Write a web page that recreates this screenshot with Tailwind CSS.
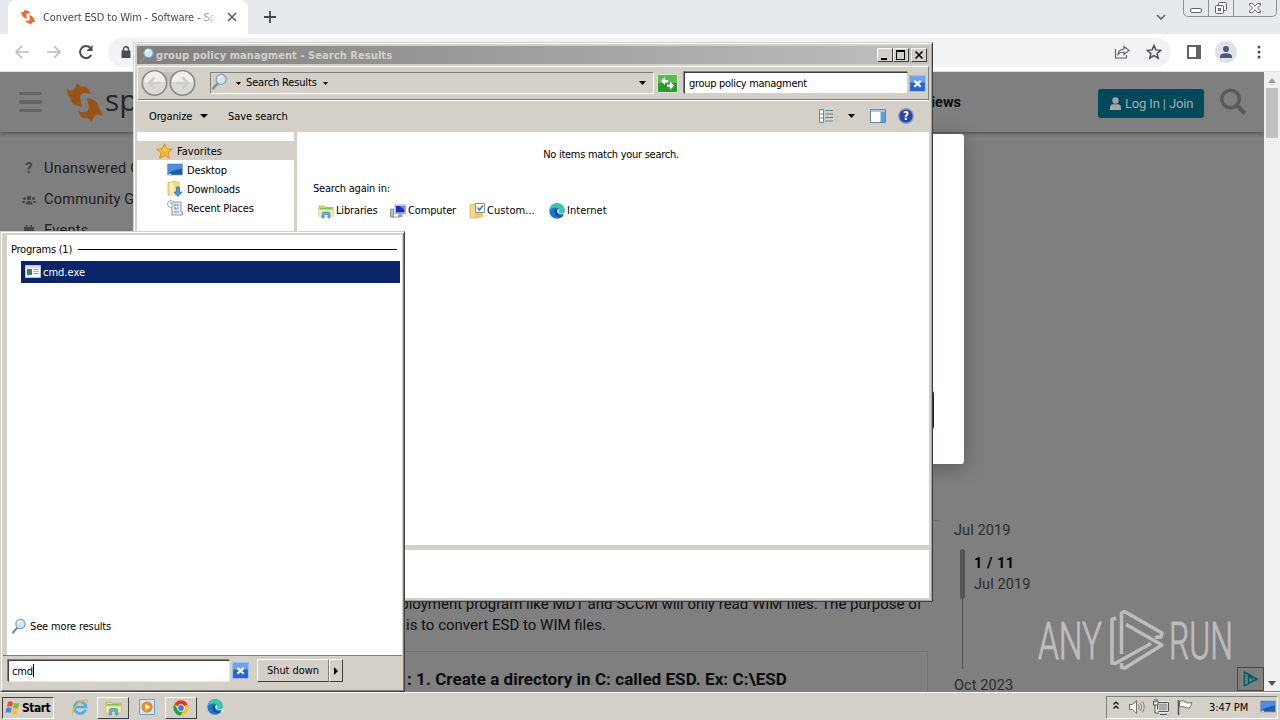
<!DOCTYPE html>
<html lang="en">

<head>
    <meta charset="UTF-8">
    <meta name="viewport" content="width=device-width, initial-scale=1.0">
    <title>Convert ESD to Wim - Software - Spiceworks</title>
    <script src="https://cdn.jsdelivr.net/npm/@tailwindcss/browser@4"></script>
</head>

<body class="w-[1280px] h-[720px] overflow-hidden relative bg-[#7f7f7f] text-black text-[11px] leading-[14px] tracking-[-0.15px] font-['DejaVu_Sans_Condensed','DejaVu_Sans',sans-serif] [font-stretch:condensed] whitespace-nowrap">

    <!-- Shared icons -->
    <svg class="hidden">
        <symbol id="lens" viewBox="0 0 16 16">
            <path d="M6.5 9.5L2 14.5" stroke="#8a8a8a" stroke-width="2.2" stroke-linecap="round" />
            <circle cx="9.5" cy="6" r="4.7" fill="#cfe6f8" stroke="#8c9db0" stroke-width="1.2" />
            <path d="M7 5.5a3 3 0 0 1 3-2.5" stroke="#fff" stroke-width="1.4" fill="none" />
        </symbol>
        <symbol id="folder" viewBox="0 0 16 16">
            <path d="M1 3h5l1 1.5h8V13H1z" fill="#f3d57a" stroke="#c9a548" stroke-width=".8" />
            <path d="M2 5.500h12" stroke="#7cc36a" stroke-width="1.500" />
            <path d="M1 7h14v6H1z" fill="#fbeaa6" />
            <path d="M4 15V10.500q0-1.500 1.500-1.500h5q1.500 0 1.500 1.500V15h-2v-3.500H6V15z" fill="#5fb4e6" stroke="#3c86c0" stroke-width=".6" />
        </symbol>
        <symbol id="edge" viewBox="0 0 16 16">
            <circle cx="8" cy="8" r="7.700" fill="#1a78c8" />
            <path d="M.5 7C1.500 2.500 5 .3 8.200.3c4.500 0 7.500 3.200 7.500 6.400 0 2.500-1.800 3.900-3.900 3.900-1.600 0-2.300-.7-2.100-1.300.6-.6.700-1.300.7-1.900 0-1.700-1.600-3-4-3-2.300 0-4.500 1-5.900 2.600z" fill="#3cc6b0" />
            <path d="M5.500 7c-1 4 2 7.500 6 7 1.400-.2 2.400-.8 3.200-1.700-2.500 1-6 .3-6.500-2.800-.2-1 .2-1.600.6-2.200C8 6.300 6 6 5.500 7z" fill="#0d4f98" />
            <path d="M9.700 9.300c.7-.8.7-2 .5-2.700-.8-.8-2 0-2 1.700.2 2.700 4 3.700 7 2.200l-1 2.300 1.800 1V8.500c-.7 1.500-2.300 2.200-4.200 2.100-1.500 0-2.300-.7-2.100-1.300z" fill="#fff" />
        </symbol>
        <symbol id="screen" viewBox="0 0 16 14">
            <path d="M.5 1h15v11H.5z" fill="#2459b0" stroke="#8fa4bd" stroke-width=".8" />
            <path d="M1 1.500h14v4Q8 6 1 10z" fill="#4d8fe0" />
            <path d="M1.500 10.500h2.500v1.500H1.500z" fill="#b6e0ff" />
        </symbol>
        <symbol id="clear" viewBox="0 0 16 16">
            <path d="M0 0h16v16H0z" fill="#2b65cb" />
            <path d="M0 0h16v7H0z" fill="#6ea2ea" />
            <path d="M.5.5h15v15H.5z" fill="none" stroke="#9cc0ef" />
            <path d="M5 5.500l6 5.500M11 5.500L5 11" stroke="#fff" stroke-width="2" />
        </symbol>
        <symbol id="spice" viewBox="0 0 34 38">
            <path id="swirl" d="M10 0q2 4 7 4 5 1 6 7-6-3-9 0-3 3 1 12-8 0-11-5l-1-4Q0 11 0 6q3 2 6 1 2-2 4-7z" />
            <use href="#swirl" transform="rotate(180 17 19)" />
        </symbol>
    </svg>

    <!-- Browser window -->
    <div class="h-[691px] flex flex-col">
        <!-- Tab strip -->
        <div class="h-[34px] bg-[#e7eaed] flex">
            <div class="ml-2 w-[240px] h-[34px] bg-white rounded-t-lg flex items-center pl-[13px] pr-[10px]">
                <svg class="w-[14px] h-4 mr-2 fill-[#f26a21]"><use href="#spice" /></svg>
                <span class="w-[175px] mt-[2px] overflow-hidden text-[#45494d] tracking-[-0.1px] [mask-image:linear-gradient(to_right,#000_88%,transparent)]">Convert ESD to Wim - Software - Spiceworks</span>
                <svg class="w-[10px] h-[10px] ml-[9px]" viewBox="0 0 10 10"><path d="M1 1l8 8M9 1L1 9" stroke="#5f6368" stroke-width="1.700" /></svg>
            </div>
            <svg class="w-3 h-3 ml-4 mt-[11px]" viewBox="0 0 12 12"><path d="M6 0v12M0 6h12" stroke="#45494d" stroke-width="1.800" /></svg>
            <svg class="w-[10px] h-[6px] ml-auto mr-[17px] mt-[14px]" viewBox="0 0 10 6"><path d="M1 1l4 4 4-4" fill="none" stroke="#5f6368" stroke-width="1.600" /></svg>
            <!-- Window buttons -->
            <div class="h-[17px] w-[94px] mr-[3px] border border-t-0 border-[#8c9196] rounded-b-[5px] flex">
                <div class="w-[25px] border-r border-[#8c9196]"><svg class="w-6 h-4" viewBox="0 0 24 16"><rect x="6.500" y="8.500" width="11" height="4" rx="1.500" fill="#fff" stroke="#5c6168" /></svg></div>
                <div class="w-[25px] border-r border-[#8c9196]"><svg class="w-6 h-4" viewBox="0 0 24 16" fill="#fff" stroke="#5c6168"><rect x="9.500" y="2.500" width="8" height="8" rx="1" /><rect x="6.500" y="5.500" width="8" height="8" rx="1" /><rect x="9.500" y="8.500" width="2" height="2" /></svg></div>
                <svg class="w-[42px] h-4" viewBox="0 0 42 16"><path d="M15.500 3.500h3l2.500 2.700 2.500-2.700h3v1.500L23.500 8l3 3v1.500h-3L21 9.800l-2.500 2.700h-3V11l3-3-3-3z" fill="#fff" stroke="#5c6168" /></svg>
            </div>
        </div>
        <!-- Toolbar -->
        <div class="h-[38px] bg-white border-b border-[#dcdee0] flex items-center shrink-0">
            <svg class="w-4 h-4 ml-[14px] -mt-px" viewBox="0 0 16 16" fill="none" stroke="#babcbe" stroke-width="1.600"><path d="M15 8H2M8 2L2 8l6 6" /></svg>
            <svg class="w-4 h-4 ml-4 -mt-px" viewBox="0 0 16 16" fill="none" stroke="#babcbe" stroke-width="1.600"><path d="M1 8h13M8 2l6 6-6 6" /></svg>
            <svg class="w-4 h-4 ml-4 -mt-px" viewBox="0 0 16 16"><path d="M13.300 11A6 6 0 1 1 12.500 4" fill="none" stroke="#4a4d51" stroke-width="2" /><path d="M14.500 1v6h-6z" fill="#4a4d51" /></svg>
            <div class="ml-[14px] w-[1063px] h-[29px] rounded-full bg-[#f1f3f4] flex items-center">
                <svg class="w-[10px] h-3 ml-[13px] -mt-[2px]" viewBox="0 0 10 12"><path d="M.5 4.500h9V12h-9z" fill="#4a4d51" /><path d="M2.500 5V3.200a2.500 2.500 0 0 1 5 0V5" fill="none" stroke="#4a4d51" stroke-width="1.400" /></svg>
                <svg class="w-4 h-4 ml-auto mr-4 -mt-px" viewBox="0 0 16 16" fill="none" stroke="#5f6368" stroke-width="1.200"><path d="M1.500 5v9h11v-3" /><path d="M4 10.500q.5-5 6-5.500V2.500L15 6.500l-5 4V8q-4 0-6 2.500z" /></svg>
                <svg class="w-4 h-4 mr-[9px] -mt-px" viewBox="0 0 16 16"><path d="M8 1.500l1.900 4.400 4.800.4-3.600 3.100 1.100 4.700L8 11.600l-4.200 2.500 1.100-4.700L1.300 6.300l4.800-.4z" fill="none" stroke="#4a4d51" stroke-width="1.500" /></svg>
            </div>
            <svg class="w-[14px] h-[14px] ml-4 -mt-px" viewBox="0 0 14 14"><path d="M1 1h12v12H1z" fill="none" stroke="#5f6368" stroke-width="2" /><path d="M9 0h5v14H9z" fill="#5f6368" /></svg>
            <svg class="w-[22px] h-[22px] ml-[14px] -mt-px" viewBox="0 0 22 22"><circle cx="11" cy="11" r="11" fill="#dfe2e8" /><circle cx="11" cy="8" r="3" fill="#4b5a78" /><path d="M5 17v-1.500C5 13 9 12.300 11 12.300s6 .7 6 3.200V17z" fill="#4b5a78" /></svg>
            <svg class="w-1 h-[14px] ml-[20px] -mt-px" viewBox="0 0 4 14" fill="#4a4d51"><circle cx="2" cy="2" r="1.500" /><circle cx="2" cy="7" r="1.500" /><circle cx="2" cy="12" r="1.500" /></svg>
        </div>
        <!-- Page -->
        <div class="flex-1 flex min-h-0 tracking-normal font-[Roboto,sans-serif] [font-stretch:normal]">
            <div class="w-[1264px] flex flex-col relative overflow-hidden">
                <div class="h-[60px] shrink-0 flex items-center shadow-[0_1px_4px_rgba(0,0,0,0.45)]">
                    <div class="ml-[19px] w-[23px] flex flex-col gap-[5px]">
                        <div class="h-[3.500px] bg-[#646464] rounded-sm"></div>
                        <div class="h-[3.500px] bg-[#646464] rounded-sm"></div>
                        <div class="h-[3.500px] bg-[#646464] rounded-sm"></div>
                    </div>
                    <svg class="w-[35px] h-[39px] ml-[25px] fill-[#9a5216]"><use href="#spice" /></svg>
                    <span class="ml-[3px] -mt-[5px] w-[200px] text-[30px] leading-8 text-[#262626] font-['Open_Sans']">spiceworks</span>
                    <span class="w-[656px] mt-[2px] text-right text-[14.500px] leading-5 font-bold text-[#0c0c0c]">Reviews</span>
                    <div class="ml-[137px] w-[106px] h-[29px] mt-[3px] rounded-[3px] bg-[#00495a] flex items-center pl-3 text-[13px] text-[#a5b0b3] tracking-[-0.15px]">
                        <svg class="w-[11px] h-[13px] mr-1" viewBox="0 0 11 13" fill="#a5a5a5"><circle cx="5.500" cy="3.500" r="3.200" /><path d="M0 13v-2.500Q0 7.500 3 7.300h5q3 .2 3 3.200V13z" /></svg>
                        <span>Log In | Join</span>
                    </div>
                    <svg class="w-7 h-7 ml-[15px]" viewBox="0 0 28 28" fill="none" stroke="#5a5a5a"><circle cx="11.500" cy="11" r="8.800" stroke-width="3.500" /><path d="M18 17.500l8 8" stroke-width="4.200" /></svg>
                </div>
                <div class="flex flex-1 min-h-0">
                    <!-- Sidebar -->
                    <div class="w-[300px] pt-[21px] pl-[22px] text-[14.500px] leading-[31px] text-[#202020] tracking-[0.25px]">
                        <div class="flex items-center"><span class="w-[14px] mr-2 text-center font-bold text-[#454545]">?</span>Unanswered Questions</div>
                        <div class="flex items-center">
                            <svg class="w-[14px] h-[10px] mr-2" viewBox="0 0 14 10" fill="#454545"><circle cx="7" cy="3" r="2.300" /><circle cx="2.500" cy="3.500" r="1.500" /><circle cx="11.500" cy="3.500" r="1.500" /><path d="M3.500 9.500q0-3.500 3.500-3.500t3.500 3.500zM0 8q0-2.500 3-2.300L2.500 8zM14 8q0-2.500-3-2.300l.5 2.300z" /></svg>
                            Community Groups
                        </div>
                        <div class="flex items-center">
                            <svg class="w-[14px] h-3 mr-2" viewBox="0 0 14 12" fill="#454545"><path d="M2 2h2V0h1.500v2h3V0H10v2h2v10H2z" /></svg>
                            Events
                        </div>
                    </div>
                    <!-- Post -->
                    <div class="w-[628px] h-full relative flex flex-col">
                        <div class="pt-[462px] text-[15px] leading-[21px] text-[#0e0e0e]">
                            <div class="w-[622px] text-right">deployment program like MDT and SCCM will only read WIM files. The purpose of</div>
                            <div class="pl-[106px]">is to convert ESD to WIM files.</div>
                        </div>
                        <div class="mt-[15px] flex-1 border border-b-0 border-[#737373] pt-[17px] pl-[106px] text-[17px] leading-5 font-bold text-[#0c0c0c] tracking-[0.05px]">: 1. Create a directory in C: called ESD. Ex: C:\ESD</div>
                    </div>
                    <!-- Timeline -->
                    <div class="flex-1 pt-[388px]">
                        <div class="w-3 border-t border-[#707070]"></div>
                        <div class="pl-[26px] text-[14.500px] leading-5 text-[#2c2c2c] tracking-[0.1px]">
                            <div>Jul 2019</div>
                            <div class="flex mt-[8px] h-[120px] ml-[6px]">
                                <div class="w-[5px] flex flex-col items-center">
                                    <div class="w-[5px] h-[50px] rounded-sm bg-[#555]"></div>
                                    <div class="w-px flex-1 bg-[#555]"></div>
                                </div>
                                <div class="ml-[9px] pt-[5px]">
                                    <div class="font-bold text-black tracking-[0.5px]">1 / 11</div>
                                    <div class="mt-px">Jul 2019</div>
                                </div>
                            </div>
                            <div class="mt-[7px]">Oct 2023</div>
                        </div>
                    </div>
                </div>
                <!-- Dialog over the page -->
                <div class="absolute left-[300px] top-[62px] w-[664px] h-[330px] bg-white rounded-[3px] shadow-[0_4px_20px_rgba(0,0,0,0.3)]">
                    <div class="absolute right-[30px] top-[256px] w-40 h-10 bg-[#222] rounded-sm"></div>
                </div>
                <!-- Ad marker -->
                <div class="absolute right-0 bottom-0 w-[27px] h-6 border border-[#4a4a4a] flex items-center justify-center">
                    <svg class="w-[15px] h-4" viewBox="0 0 15 16" fill="none" stroke="#005f66" stroke-width="1.600"><path d="M4.500 13.500l-3 1V1L14 8l-8.500 4.500V5l4.500 3" /></svg>
                </div>
                <!-- Watermark -->
                <svg class="absolute left-[1036px] top-[536px] w-[200px] h-[66px]" viewBox="0 0 200 66">
                    <g fill="#bdbdbd" stroke="#bdbdbd" stroke-width="1" font-family="Roboto" font-size="51" font-weight="300">
                        <text x="2" y="51" textLength="64" lengthAdjust="spacingAndGlyphs">ANY</text>
                        <text x="133" y="51" textLength="64" lengthAdjust="spacingAndGlyphs">RUN</text>
                    </g>
                    <g fill="none" stroke="#bdbdbd" stroke-width="3.500" stroke-linejoin="round">
                        <path d="M80 10l-4 1.500V55l3 .5 36-20" />
                        <path d="M85.500 46V5l3-1.500L126 25l-1 4-6 .5" />
                        <path d="M90 16.500L126 37 89 60l-3.500-.5V55" />
                    </g>
                </svg>
            </div>
            <!-- Scrollbar -->
            <div class="w-4 bg-[#f1f1f1] flex flex-col items-center">
                <svg class="w-2 h-4" viewBox="0 0 8 16"><path d="M0 11l4-5 4 5z" fill="#a3a3a3" /></svg>
                <div class="w-3 h-[50px] bg-[#c1c1c1]"></div>
                <svg class="w-2 h-4 mt-auto" viewBox="0 0 8 16"><path d="M0 6l4 5 4-5z" fill="#505050" /></svg>
            </div>
        </div>
    </div>

    <!-- Explorer window -->
    <div class="absolute left-[133px] top-[42px] w-[800px] h-[560px] bg-[#d4d0c8] border border-l-[#d4d0c8] border-t-[#d4d0c8] border-r-[#404040] border-b-[#404040] shadow-[inset_1px_1px_#fff,inset_-1px_-1px_#a0a0a0] p-[3px] flex flex-col">
        <!-- Title bar -->
        <div class="h-[18px] bg-linear-to-r from-[#808080] to-[#c0c0c0] flex items-center pl-[2px] pr-[2px] shrink-0">
            <svg class="w-4 h-4 mr-[1px]"><use href="#lens" /></svg>
            <span class="mt-[2px] font-bold text-[#d4d0c8] tracking-[0.07px]">group policy managment - Search Results</span>
            <div class="ml-auto flex h-[14px]">
                <div class="w-4 bg-[#d4d0c8] border border-t-white border-l-white border-r-[#404040] border-b-[#404040]"><svg class="w-[14px] h-3" viewBox="0 0 14 12"><path d="M3 9h6v2H3z" /></svg></div>
                <div class="w-4 bg-[#d4d0c8] border border-t-white border-l-white border-r-[#404040] border-b-[#404040]"><svg class="w-[14px] h-3" viewBox="0 0 14 12"><path d="M2 1h9v10H2zM3 3v7h7V3z" fill-rule="evenodd" /></svg></div>
                <div class="w-4 ml-[2px] bg-[#d4d0c8] border border-t-white border-l-white border-r-[#404040] border-b-[#404040]"><svg class="w-[14px] h-3" viewBox="0 0 14 12"><path d="M3.500 2.500l7 7M10.500 2.500l-7 7" stroke="#000" stroke-width="1.600" /></svg></div>
            </div>
        </div>
        <!-- Address bar -->
        <div class="mt-[2px] h-[34px] shrink-0 border border-white border-b-[#808080] border-r-[#808080] shadow-[0_1px_#fff] flex items-center">
            <svg class="w-[60px] h-[28px] ml-[2px]" viewBox="0 0 60 28">
                <path d="M14 3h30v9H14z" fill="#c3c0ba" />
                <g fill="#dcdad5" stroke="#8b8a87" stroke-width="1.600"><circle cx="14.500" cy="14" r="12.200" /><circle cx="42.500" cy="14" r="12.200" /></g>
                <path d="M4 13a10.500 10.500 0 0 1 21 0zM32 13a10.500 10.500 0 0 1 21 0z" fill="#f0efec" />
                <g fill="none" stroke="#cfcdc8" stroke-width="2.500"><path d="M21 14H10M14.500 8.500L9 14l5.500 5.500M36 14h11M42.500 8.500L48 14l-5.500 5.500" /></g>
            </svg>
            <div class="ml-[10px] w-[444px] h-[22px] border border-[#808080] border-r-white border-b-white flex items-center">
                <svg class="w-[17px] h-[17px] -mt-1"><use href="#lens" /></svg>
                <svg class="w-[5px] h-[3px] ml-2 mr-[5px]" viewBox="0 0 5 3"><path d="M0 0h5L2.500 3z" /></svg>
                <span>Search Results</span>
                <svg class="w-[5px] h-[3px] ml-[6px]" viewBox="0 0 5 3"><path d="M0 0h5L2.500 3z" /></svg>
                <svg class="w-[7px] h-[4px] ml-auto mr-[7px]" viewBox="0 0 7 4"><path d="M0 0h7L3.500 4z" /></svg>
            </div>
            <svg class="w-[21px] h-[19px] ml-[3px]" viewBox="0 0 21 19"><path d="M.5.5h20v18H.5z" fill="#2c9a30" stroke="#d5ead0" /><path d="M1 1h19v8H1z" fill="#5cbb55" /><path d="M4 7l4-4v3h3v2.500H8V11zM17 11.500l-4-4v3h-3V13h3v3z" fill="#fff" /></svg>
            <div class="ml-[6px] w-[224px] h-[22px] bg-white border border-t-[#404040] border-l-[#404040] border-[#d4d0c8] shadow-[-1px_-1px_#808080] flex items-center pl-1 pt-[2px] tracking-[-0.3px]">group policy managment</div>
            <svg class="w-[17px] h-[17px] ml-px shrink-0"><use href="#clear" /></svg>
        </div>
        <!-- Command bar -->
        <div class="h-[32px] shrink-0 flex items-center pl-[12px]">
            <span class="w-[43px] mt-[2px]">Organize</span>
            <svg class="w-[8px] h-[4px] ml-2 mr-5" viewBox="0 0 8 4"><path d="M0 0h8L4 4z" /></svg>
            <span class="mt-[2px] tracking-[-0.05px]">Save search</span>
            <svg class="w-[14px] h-[14px] ml-auto" viewBox="0 0 14 14"><path d="M.5.5h4v13h-4zM.5 5h4M.5 9h4" fill="#fff" stroke="#68859f" /><path d="M6 1.500h8M6 5h8M6 8.500h8M6 12h8" stroke="#5588b5" /></svg>
            <svg class="w-[7px] h-[4px] ml-[15px]" viewBox="0 0 7 4"><path d="M0 0h7L3.500 4z" /></svg>
            <svg class="w-4 h-[14px] ml-[15px]" viewBox="0 0 16 14"><path d="M.5.500h15v13H.5z" fill="#fff" stroke="#5d87ad" /><path d="M1 1h14v2H1z" fill="#a9c9e2" /><path d="M10.500 3h4.500v10h-4.500z" fill="#55a3d6" /></svg>
            <svg class="w-4 h-4 ml-3 mr-[15px]" viewBox="0 0 16 16"><circle cx="8" cy="8" r="7.300" fill="#2447a8" stroke="#8d9cc2" stroke-width="1.400" /><text x="8" y="12" text-anchor="middle" font-size="11.500" font-weight="bold" fill="#fff">?</text></svg>
        </div>
        <!-- Content -->
        <div class="h-[413px] shrink-0 flex bg-white">
            <div class="w-[157px] pt-[9px]">
                <div class="h-[19px] bg-[#d4d0c8] flex items-center pl-[19px]">
                    <svg class="w-[17px] h-4 mr-1" viewBox="0 0 17 16"><path d="M8.500.8l2.300 5 5.400.6-4 3.600 1.200 5.300-4.900-2.800-4.900 2.800L4.800 10l-4-3.600 5.400-.6z" fill="#fbb62a" stroke="#d98a14" stroke-width=".9" /><path d="M8.500 3l1.400 3.500 3 .5-4.400 1z" fill="#ffe58a" /></svg>
                    <span class="mt-[2px] tracking-[0.05px]">Favorites</span>
                </div>
                <div class="h-[19px] flex items-center pl-[30px]"><svg class="w-4 h-[14px] mr-1"><use href="#screen" /></svg><span class="mt-[2px]">Desktop</span></div>
                <div class="h-[19px] flex items-center pl-[30px]">
                    <svg class="w-4 h-4 mr-1" viewBox="0 0 16 16"><path d="M1 1.500l6-1 5 1V14H1z" fill="#f4da84" stroke="#cfae56" stroke-width=".7" /><path d="M3 1l4 1.500v13L3 14z" fill="#fcedb0" /><path d="M9.500 6h3v5h2.500l-4 4.500-4-4.500h2.500z" fill="#3e9be0" stroke="#1e6bb0" stroke-width=".7" /></svg>
                    <span class="mt-[2px]">Downloads</span>
                </div>
                <div class="h-[19px] flex items-center pl-[30px]">
                    <svg class="w-4 h-4 mr-1" viewBox="0 0 16 16"><path d="M4 2h10v10h1.500v3H5V10z" fill="#e9eef2" stroke="#8a959f" /><path d="M7 5h5M7 8h2v2M10 8h2M7 12h5" stroke="#5f86aa" fill="none" /><circle cx="4" cy="4" r="3.400" fill="#fff" stroke="#8fa2b4" /><path d="M4 2v2h2" fill="none" stroke="#4c6d90" stroke-width=".8" /></svg>
                    <span class="mt-[2px]">Recent Places</span>
                </div>
            </div>
            <div class="w-[3px] bg-[#d4d0c8]"></div>
            <div class="flex-1 pt-4 pl-4">
                <div class="w-[596px] text-center tracking-[-0.28px]">No items match your search.</div>
                <div class="mt-5 tracking-[-0.2px]">Search again in:</div>
                <div class="mt-[7px] flex items-center h-4">
                    <div class="w-[72px] ml-[5px] flex items-center gap-[2px]"><svg class="w-4 h-4"><use href="#folder" /></svg>Libraries</div>
                    <div class="w-[79px] flex items-center gap-[2px]">
                        <svg class="w-4 h-4" viewBox="0 0 16 16"><path d="M5 2h10.500v8.500H5z" fill="#d8dce4" stroke="#8b93a3" stroke-width=".7" /><path d="M6 3h8.500v6.500H6z" fill="#1c33b8" /><path d="M10 3h4.500v4z" fill="#6b8df0" /><path d="M8.500 10.500h3.500l1 3.500H8z" fill="#9aa1b0" /><path d="M.5 6h3v8h-3zM2 14h8" fill="#b9bfca" stroke="#7e8696" stroke-width=".8" /></svg>
                        Computer
                    </div>
                    <div class="w-[80px] flex items-center gap-[2px]">
                        <svg class="w-4 h-4" viewBox="0 0 16 16"><path d="M1 2l5-1 3 1v13H1z" fill="#f4da84" stroke="#cfae56" stroke-width=".7" /><path d="M6 7l8 1v6l-8 1z" fill="#e8c760" /><path d="M6.500.500h9v9h-9z" fill="#fff" stroke="#7d90a8" /><path d="M8.500 4.500l2 2.500 3.500-4.500" fill="none" stroke="#3b6dc0" stroke-width="1.400" /></svg>
                        <span class="tracking-[0.05px]">Custom...</span>
                    </div>
                    <div class="flex items-center gap-[2px] tracking-[0.05px]"><svg class="w-4 h-4"><use href="#edge" /></svg>Internet</div>
                </div>
            </div>
        </div>
        <div class="h-[5px] shrink-0 bg-[#d4d0c8]"></div>
        <div class="flex-1 bg-white"></div>
    </div>

    <!-- Start menu -->
    <div class="absolute left-0 top-[231px] w-[405px] h-[461px] bg-[#d4d0c8] border border-t-[#d4d0c8] border-l-[#d4d0c8] border-r-[#404040] border-b-[#404040] shadow-[inset_1px_1px_#fff,inset_-1px_-1px_#808080] pt-[3px] pl-[2px] pr-[2px]">
        <div class="ml-1 h-[420px] bg-white flex flex-col">
            <div class="flex items-center pt-[7px] pl-1">
                <span class="mt-px -mb-px tracking-[-0.25px]">Programs (1)</span>
                <div class="ml-[6px] mr-[5px] flex-1 h-px bg-black"></div>
            </div>
            <div class="ml-[14px] mr-[2px] mt-[5px] h-[22px] bg-[#0a246a] text-white flex items-center pl-1">
                <svg class="w-4 h-[13px] mr-[2px] -mt-[2px]" viewBox="0 0 16 13"><path d="M.5.5h15v12H.5z" fill="#f4f7fa" stroke="#b9c3cf" /><path d="M1 1h14v2H1z" fill="#cfdceb" /><path d="M2 4h5v6H2z" fill="#3c7d6d" /><path d="M8.500 4.500h5M8.500 6.500h2M11.500 6.500h2M8.500 8.500h5" stroke="#8aa0b5" /></svg>
                <span class="mt-[2px] tracking-[0]">cmd.exe</span>
            </div>
            <div class="mt-auto mb-[21px] flex items-center pl-1">
                <svg class="w-4 h-4 mr-[3px]"><use href="#lens" /></svg><span class="mt-[2px]">See more results</span>
            </div>
        </div>
        <div class="h-px bg-[#808080]"></div>
        <div class="flex items-center pt-[3px] pl-[5px]">
            <div class="w-[222px] h-[22px] bg-white border border-t-[#404040] border-l-[#404040] border-[#e8e6e0] shadow-[-1px_-1px_#808080] flex items-center pl-[3px]"><span class="mt-[2px]">cmd</span><div class="w-px h-[13px] bg-black"></div></div>
            <svg class="w-[17px] h-[17px] ml-[2px]"><use href="#clear" /></svg>
            <div class="ml-2 w-[72px] h-[23px] border border-t-white border-l-white border-r-[#808080] border-b-[#404040] flex items-center justify-center tracking-[-0.05px]">Shut down</div>
            <div class="w-[14px] h-[23px] border border-t-white border-l-white border-r-[#404040] border-b-[#404040] flex items-center justify-center"><svg class="w-1 h-2" viewBox="0 0 4 8"><path d="M0 0l4 4-4 4z" /></svg></div>
        </div>
    </div>

    <!-- Taskbar -->
    <div class="h-[28px] mt-px bg-[#d4d0c8] border-t border-white flex items-center">
        <div class="ml-[2px] w-[52px] h-[22px] mt-[2px] border border-t-[#404040] border-l-[#404040] border-r-white border-b-white flex items-center pl-[2px] text-[12px] font-bold tracking-[-0.5px]">
            <svg class="w-4 h-4 mr-px" viewBox="0 0 16 16"><path d="M3 2q3-1.500 5 .3L7 7Q4.500 5.500 2 7z" fill="#e8502a" /><path d="M9 2.800q3 1.500 5.500 0L13 8q-2.500 1.200-5-.3z" fill="#7fb93c" /><path d="M1.600 8q3-1.500 5 .3L5.600 13Q3 11.500.3 13z" fill="#3d8be0" /><path d="M7.600 8.800q3 1.500 5.300.3L11.400 14.300q-2.500 1.200-4.900-.5z" fill="#f8c22c" /></svg>
            <span>Start</span>
        </div>
        <!-- Internet Explorer -->
        <svg class="w-[18px] h-[18px] ml-[17px] mr-[-1px]" viewBox="0 0 16 16" fill="none"><path d="M13 10.500a5.200 5.200 0 1 1 .3-2.500H4" stroke="#4db0e8" stroke-width="2.400" /><path d="M2 14.500C-.5 13 4 4 13 1.500q2.500-.3 1.500 3" stroke="#e9b93c" stroke-width="1.100" /></svg>
        <div class="ml-[9px] w-8 h-[22px] mt-[2px] border border-t-white border-l-white border-r-[#404040] border-b-[#404040] flex items-center justify-center"><svg class="w-[17px] h-[17px]"><use href="#folder" /></svg></div>
        <!-- Media player -->
        <svg class="w-4 h-4 ml-[10px]" viewBox="0 0 16 16"><path d="M.5.500h15v15H.5z" fill="#cfe3f4" stroke="#6ea3cf" /><circle cx="8" cy="8" r="5.600" fill="#f08a1d" /><path d="M6.300 4.800l5 3.200-5 3.200z" fill="#fff" /></svg>
        <div class="ml-[10px] w-8 h-[22px] mt-[2px] border border-t-white border-l-white border-r-[#404040] border-b-[#404040] flex items-center justify-center">
            <svg class="w-4 h-4" viewBox="0 0 16 16"><circle cx="8" cy="8" r="7.600" fill="#f7c41e" /><path d="M8 8L1.400 4.200A7.600 7.600 0 0 1 14.600 4.200z" fill="#e03a2d" /><path d="M14.600 4.200H8L4.500 8z" fill="#e03a2d" /><path d="M1.400 4.200A7.600 7.600 0 0 0 7.500 15.600L10 11 5 10z" fill="#2c9e4b" /><circle cx="8" cy="8" r="3.700" fill="#fff" /><circle cx="8" cy="8" r="2.900" fill="#3d7fe8" /></svg>
        </div>
        <svg class="w-4 h-4 ml-[10px]"><use href="#edge" /></svg>
        <!-- Tray -->
        <div class="ml-auto mr-[2px] w-[172px] h-[23px] mt-[1px] border border-[#808080] border-r-white border-b-white flex items-center pl-[6px] shrink-0">
            <svg class="w-[6px] h-2 -mt-1" viewBox="0 0 6 8" fill="none" stroke="#000" stroke-width="1.200"><path d="M.5 3.500L3 1l2.500 2.500M.5 7.500L3 5l2.500 2.500" /></svg>
            <svg class="w-4 h-[14px] ml-[10px]" viewBox="0 0 16 14"><path d="M.5 4.500h3l4-4v13l-4-4h-3z" fill="#fff" stroke="#6e6e6e" /><path d="M9.500 4.500q1.500 2.500 0 5M11.500 3q2.500 4 0 8M13.500 1.500q3.500 5.500 0 11" fill="none" stroke="#858585" /></svg>
            <svg class="w-4 h-4 ml-2" viewBox="0 0 16 16"><path d="M4.500 3.500h11v9h-11z" fill="#a9a9a9" stroke="#fff" stroke-width="2" /><path d="M4.500 3.500h11v9h-11zM7 15.500h7" fill="none" stroke="#555" /><path d="M.5 2v4h1.500v8h4M5 2v4H2M2 0v3M4 0v3" fill="#fff" stroke="#4f4f4f" /></svg>
            <svg class="w-4 h-4 ml-2" viewBox="0 0 16 16"><path d="M2.500 2.500q3-1.500 6 0v1q3 1 6.500 0-1.500 4-2.500 5.500-3 .6-5-1-2.500-.8-5 0z" fill="#fff" stroke="#707070" /><path d="M1.500 1v15" stroke="#555" stroke-width="1.500" /></svg>
            <span class="ml-4 mt-[2px] w-[40px] tracking-[-0.1px]">3:47 PM</span>
            <svg class="w-4 h-[14px] ml-[11px]"><use href="#screen" /></svg>
        </div>
    </div>

</body>

</html>
